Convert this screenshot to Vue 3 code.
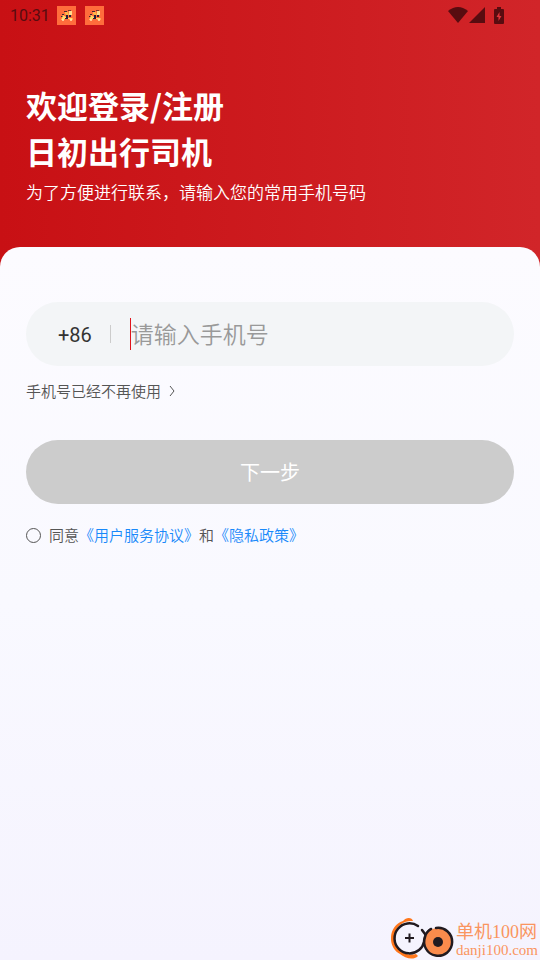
<script setup>
import { ref } from 'vue'

const phone = ref('')
const agreed = ref(false)
const notifications = [1, 2]
</script>

<template>
  <div class="page">
    <div class="status">
      <span class="clock">10:31</span>
      <svg v-for="n in notifications" :key="n" class="notice" viewBox="0 0 19 19" aria-hidden="true">
        <rect width="19" height="19" fill="#ff6d3c" />
        <path d="M12 5h3v4h-3z" fill="#ffdc8a" />
        <path d="M11 4h3v1h-3z" fill="#7a3a2c" />
        <path d="M7 5h3v1H7z" fill="#4a2630" />
        <path d="M8 6h3l1 3-2 1-2-2z" fill="#ffb84a" />
        <path d="M5 8h2v1H5zM4 10h2v1H4z" fill="#3a2a30" />
        <path d="M6 9l3 2 2 1h4l1 1-1 1h-2l-1-1H8l-2 1H4l1-2z" fill="#ffdc6a" />
        <path d="M9 9h2v3H9zM12 9h2v2h-2z" fill="#26203a" />
        <path d="M8 12h3v1H8z" fill="#26203a" />
        <circle cx="6" cy="14" r="1" fill="#ffe9b0" />
        <circle cx="14" cy="14" r="1" fill="#ffe9b0" />
      </svg>
      <span class="system">
        <svg class="wifi" viewBox="0 0 20 16" aria-hidden="true"><path d="M0 4Q10-4 20 4L10 16z" /></svg>
        <svg class="signal" viewBox="0 0 16 16" aria-hidden="true"><path d="M16 0v16H0z" /></svg>
        <svg class="battery" viewBox="0 0 10 17" aria-hidden="true">
          <path d="M3 0h4v2h2q1 0 1 1v13q0 1-1 1H1q-1 0-1-1V3q0-1 1-1h2z" />
          <path d="M5.500 5L2.500 10h2v4l3-5h-2z" fill="#e0343a" />
        </svg>
      </span>
    </div>

    <header class="hero">
      <h1>欢迎登录/注册<br>日初出行司机</h1>
      <p>为了方便进行联系，请输入您的常用手机号码</p>
    </header>

    <main class="sheet">
      <form @submit.prevent>
        <div class="field">
          <label for="phone">+86</label>
          <span class="divider"></span>
          <span class="caret"></span>
          <input id="phone" v-model="phone" type="tel" placeholder="请输入手机号">
        </div>
        <a class="unused" href="#">
          手机号已经不再使用
          <svg viewBox="0 0 6 12" aria-hidden="true"><path d="M1 1l4 5-4 5" /></svg>
        </a>
        <button type="submit">下一步</button>
        <div class="agreement">
          <input id="agree" v-model="agreed" type="checkbox">
          <label for="agree">同意</label><a href="#">《用户服务协议》</a><span>和</span><a href="#">《隐私政策》</a>
        </div>
      </form>

      <footer class="brand">
        <svg viewBox="0 0 64 44" aria-hidden="true">
          <path d="M22 5C21 1 15 1 12 5C-3 10-4 31 9 38C14 42 22 45 27 40L25 38C17 40 10 37 6 31C1 22 4 11 12 7C16 5 19 5 22 5z" fill="#ff761b" />
          <path d="M27 10A15 15 0 1 0 28 34Q32 31 33 26Q34 17 40 13M31 14L34 18" fill="none" stroke="#211a20" stroke-width="2.500" stroke-linecap="round" />
          <path d="M14 22h9M18.500 17.500v9" stroke="#211a20" stroke-width="2" />
          <circle cx="47" cy="26" r="14" fill="#fa8b4c" />
          <path d="M45 12A14 14 0 1 1 34 21Q35 16 40 13" fill="none" stroke="#211a20" stroke-width="2.500" stroke-linecap="round" />
          <circle cx="47" cy="26" r="5" fill="#211a20" />
        </svg>
        <div class="brand-text">
          <strong>单机100网</strong>
          <span>danji100.com</span>
        </div>
      </footer>
    </main>
  </div>
</template>

<style>
body {
  margin: 0;
}
</style>

<style scoped>
* {
  box-sizing: border-box;
}

.page {
  display: flex;
  flex-direction: column;
  min-height: 100vh;
  background: linear-gradient(90deg, #c81014, #d12529);
  font-family: Roboto, "Noto Sans CJK SC", sans-serif;
}

.status {
  display: flex;
  align-items: center;
  height: 30px;
  padding: 0 36px 0 10px;
  color: #580c10;
}

.clock {
  width: 47px;
  padding-top: 2px;
  font-size: 16px;
  line-height: 20px;
}

.notice {
  width: 19px;
  height: 19px;
  margin-right: 9px;
}

.system {
  display: flex;
  align-items: center;
  margin-left: auto;
  fill: #580c10;
}

.wifi {
  width: 20px;
  height: 16px;
}

.signal {
  width: 16px;
  height: 16px;
  margin: 0 9px 0 1px;
}

.battery {
  width: 10px;
  height: 17px;
}

.hero {
  padding: 52px 26px 41px;
  color: #fff;
}

h1 {
  margin: 0;
  font-family: "Noto Sans CJK SC", sans-serif;
  font-size: 31px;
  font-weight: 700;
  line-height: 46px;
}

.hero p {
  margin: 4px 0 0;
  font-family: "Noto Sans CJK SC", sans-serif;
  font-size: 17px;
  font-weight: 350;
  line-height: 28px;
}

.sheet {
  display: flex;
  flex: 1;
  flex-direction: column;
  padding-top: 55px;
  border-radius: 20px 20px 0 0;
  background: linear-gradient(#fcfbff, #f9f9ff 50%, #f5f3fe);
}

form {
  display: flex;
  flex-direction: column;
  padding: 0 26px;
  font-family: "Noto Sans CJK SC", sans-serif;
  font-weight: 350;
}

.field {
  display: flex;
  align-items: center;
  height: 64px;
  padding: 0 32px;
  border-radius: 32px;
  background: #f3f5f7;
}

.field label {
  padding-top: 2px;
  color: #333;
  font-family: Roboto, sans-serif;
  font-size: 20px;
  font-weight: 400;
}

.divider {
  width: 1px;
  height: 18px;
  margin: 0 19px 0 18px;
  background: #ccc;
}

.caret {
  width: 1px;
  height: 32px;
  background: #e0141c;
}

.field input {
  flex: 1;
  min-width: 0;
  height: 36px;
  padding: 0 0 2px;
  border: 0;
  outline: 0;
  background: transparent;
  color: #333;
  font-family: inherit;
  font-size: 23px;
  font-weight: 350;
}

.field input::placeholder {
  color: #999;
  opacity: 1;
}

.unused {
  display: flex;
  align-items: center;
  gap: 8px;
  align-self: flex-start;
  margin-top: 13px;
  color: #555;
  font-size: 15px;
  line-height: 24px;
  text-decoration: none;
}

.unused svg {
  width: 6px;
  height: 12px;
  fill: none;
  stroke: #555;
}

button {
  height: 64px;
  margin-top: 37px;
  padding: 0 0 2px;
  border: 0;
  border-radius: 32px;
  background: #ccc;
  color: #fff;
  font-family: inherit;
  font-size: 20px;
  font-weight: 400;
}

.agreement {
  display: flex;
  flex-wrap: wrap;
  align-items: center;
  margin-top: 19px;
  color: #555;
  font-size: 15px;
  line-height: 24px;
}

.agreement input {
  width: 15px;
  height: 15px;
  margin: 0 8px 0 0;
  border: 1px solid #555;
  border-radius: 50%;
  appearance: none;
}

.agreement input:checked {
  background: #d01c22;
}

.agreement a {
  color: #1989fa;
  text-decoration: none;
}

.brand {
  display: flex;
  align-items: center;
  align-self: flex-end;
  margin-top: auto;
  padding-right: 2px;
  color: #fa9560;
}

.brand svg {
  width: 64px;
  height: 44px;
}

.brand-text {
  display: flex;
  flex-direction: column;
  padding: 3px 0 0 1px;
  font-family: "Liberation Serif", "Noto Sans CJK SC", serif;
}

.brand-text strong {
  font-size: 18px;
  font-weight: 400;
  line-height: 20px;
}

.brand-text span {
  font-size: 15px;
  line-height: 16px;
}
</style>
